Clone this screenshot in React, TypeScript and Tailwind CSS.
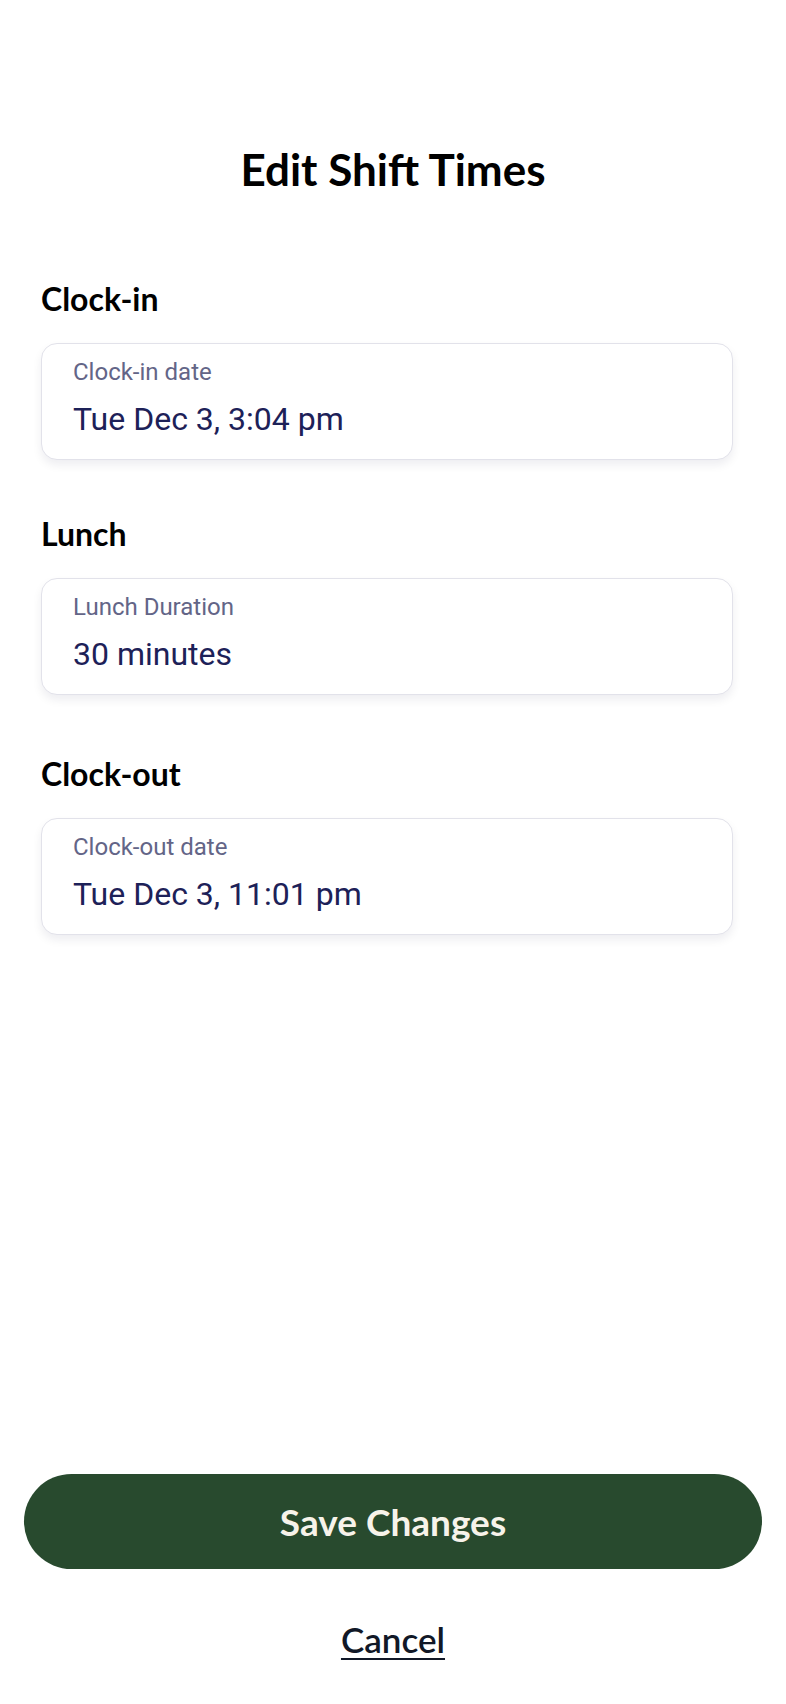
import React from "react";

const heading = { fontFamily: "Lato, 'Noto Sans', sans-serif" };
const body = { fontFamily: "Roboto, 'Noto Sans', sans-serif" };

type FieldProps = { label: string; value: string };

const Field = ({ label, value }: FieldProps) => (
  <div
    className="ml-[41px] w-[692px] rounded-[16px] border border-[#e2e2ea] bg-white px-[31px] pt-[14px] pb-[21px] shadow-[0_5px_10px_rgba(20,20,60,0.07)]"
    style={body}
  >
    <p className="text-[24px] leading-[28px] text-[#636587]">{label}</p>
    <p className="mt-[14px] text-[32px] leading-[38px] text-[#1d2158]">{value}</p>
  </div>
);

export default function App() {
  return (
    <div className="flex h-[1704px] w-full flex-col bg-white">
      <div className="pt-[143px]">
        <h1
          className="text-center text-[44px] leading-[52px] font-bold text-black"
          style={heading}
        >
          Edit Shift Times
        </h1>

        {/* Clock-in */}
        <h2 className="mt-[85px] ml-[41px] text-[32px] leading-[38px] font-bold text-black" style={heading}>
          Clock-in
        </h2>
        <div className="mt-[25px]">
          <Field label="Clock-in date" value="Tue Dec 3, 3:04 pm" />
        </div>

        {/* Lunch */}
        <h2 className="mt-[55px] ml-[41px] text-[32px] leading-[38px] font-bold text-black" style={heading}>
          Lunch
        </h2>
        <div className="mt-[25px]">
          <Field label="Lunch Duration" value="30 minutes" />
        </div>

        {/* Clock-out */}
        <h2 className="mt-[60px] ml-[41px] text-[32px] leading-[38px] font-bold text-black" style={heading}>
          Clock-out
        </h2>
        <div className="mt-[25px]">
          <Field label="Clock-out date" value="Tue Dec 3, 11:01 pm" />
        </div>
      </div>

      <div className="mt-auto flex flex-col items-center pb-[45px]">
        <button
          className="flex h-[95px] w-[738px] items-center justify-center rounded-full bg-[#284a2e] text-[37px] font-bold text-[#f7f3ea]"
          style={heading}
        >
          Save Changes
        </button>
        <button
          className="mt-[50px] text-[35px] leading-[40px] font-semibold text-[#111827] underline decoration-2 underline-offset-[5px]"
          style={heading}
        >
          Cancel
        </button>
      </div>
    </div>
  );
}
